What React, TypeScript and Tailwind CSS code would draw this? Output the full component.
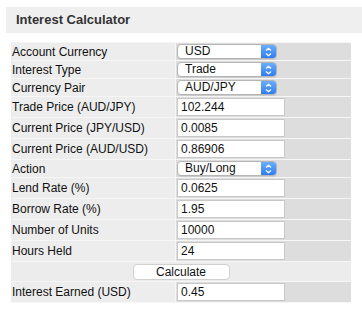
import React from 'react';

type Row =
  | { label: string; kind: 'select'; value: string }
  | { label: string; kind: 'input'; value: string };

const rows: Row[] = [
  { label: 'Account Currency', kind: 'select', value: 'USD' },
  { label: 'Interest Type', kind: 'select', value: 'Trade' },
  { label: 'Currency Pair', kind: 'select', value: 'AUD/JPY' },
  { label: 'Trade Price (AUD/JPY)', kind: 'input', value: '102.244' },
  { label: 'Current Price (JPY/USD)', kind: 'input', value: '0.0085' },
  { label: 'Current Price (AUD/USD)', kind: 'input', value: '0.86906' },
  { label: 'Action', kind: 'select', value: 'Buy/Long' },
  { label: 'Lend Rate (%)', kind: 'input', value: '0.0625' },
  { label: 'Borrow Rate (%)', kind: 'input', value: '1.95' },
  { label: 'Number of Units', kind: 'input', value: '10000' },
  { label: 'Hours Held', kind: 'input', value: '24' },
];

function FakeSelect({ value }: { value: string }) {
  return (
    <div className="flex h-[15px] w-[100px] items-stretch rounded-[4px] border border-[#b5b5b5] bg-white shadow-[0_1px_0_rgba(0,0,0,0.08)]">
      <span className="flex-1 pl-[7px] text-[12px] leading-[13px] text-[#111]">{value}</span>
      <span className="flex w-[15px] items-center justify-center rounded-r-[3px] bg-gradient-to-b from-[#6aaefc] to-[#2f7cf0]">
        <svg width="7" height="10" viewBox="0 0 7 10" fill="none">
          <path d="M1 3.5 L3.5 1.2 L6 3.5" stroke="white" strokeWidth="1.2" />
          <path d="M1 6.5 L3.5 8.8 L6 6.5" stroke="white" strokeWidth="1.2" />
        </svg>
      </span>
    </div>
  );
}

function FakeInput({ value }: { value: string }) {
  return (
    <div className="flex h-[18px] w-[108px] items-center border border-[#c8c8c8] bg-white pl-[3px] text-[12px] text-[#111]">
      {value}
    </div>
  );
}

export default function App() {
  return (
    <div className="h-[315px] w-[362px] bg-white pl-[6px] pt-[7px] font-['Liberation_Sans',Arial,sans-serif] text-[#222]">
      <div className="flex h-[26px] items-center bg-[#efefef] pl-[10px] text-[13px] font-bold text-[#333]">
        Interest Calculator
      </div>

      <div className="ml-[5px] mt-[9px] w-[340px] border-t border-[#f6f6f6]">
        {rows.map((row) => (
          <div
            key={row.label}
            className={`flex border-b border-[#f6f6f6] ${row.kind === 'select' ? 'h-[18px]' : 'h-[21px]'}`}
          >
            <div className="flex w-[164px] items-center bg-[#ededed] pl-[1px] text-[12px] text-[#111]">
              {row.label}
            </div>
            <div className="flex flex-1 items-center border-l border-[#f6f6f6] bg-[#dddddd] pl-[1px]">
              {row.kind === 'select' ? <FakeSelect value={row.value} /> : <FakeInput value={row.value} />}
            </div>
          </div>
        ))}

        <div className="flex h-[20px] items-center justify-center border-b border-[#f6f6f6] bg-[#ececec]">
          <button className="h-[16px] w-[97px] rounded-[4px] border border-[#d0d0d0] bg-white text-[12px] leading-[14px] text-[#111]">
            Calculate
          </button>
        </div>

        <div className="flex h-[21px] border-b border-[#f6f6f6]">
          <div className="flex w-[164px] items-center bg-[#ededed] pl-[1px] text-[12px] text-[#111]">
            Interest Earned (USD)
          </div>
          <div className="flex flex-1 items-center border-l border-[#f6f6f6] bg-[#dddddd] pl-[1px]">
            <FakeInput value="0.45" />
          </div>
        </div>
      </div>
    </div>
  );
}
